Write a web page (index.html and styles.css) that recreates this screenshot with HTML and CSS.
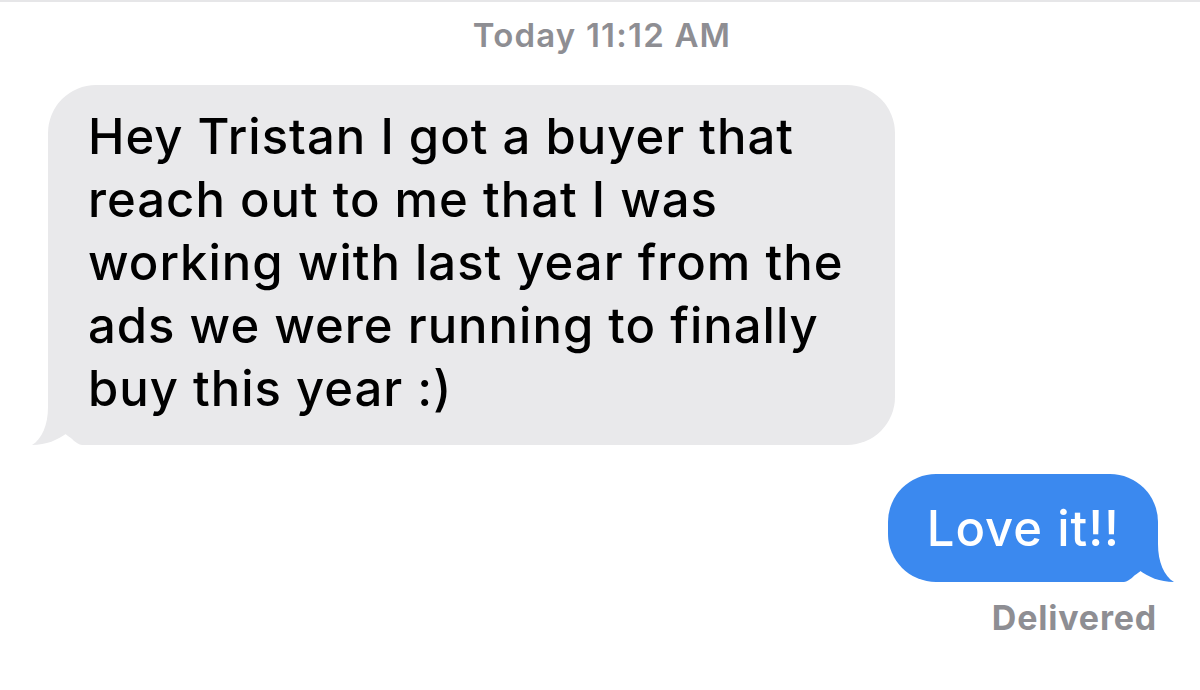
FILE: index.html
```html
<!DOCTYPE html>
<html lang="en">
<head>
<meta charset="utf-8">
<title>Messages</title>
<link rel="stylesheet" href="styles.css">
</head>
<body>
<main class="thread">
  <div class="stamp"><span class="day">Today</span> 11:12 AM</div>
  <div class="row row-them">
    <div class="bubble them">
      Hey Tristan I got a buyer that<br>reach out to me that I was<br>working with last year from the<br>ads we were running to finally<br>buy this year :)
      <svg class="tail tail-them" viewBox="0 0 70 50" aria-hidden="true"><path d="M16 0 L16 12 C16 30 10 44 0 50 C14 50 26 45 35 38 C40 44 44 49 50 50 L70 50 L70 0 Z"/></svg>
    </div>
  </div>
  <div class="row row-me">
    <div class="bubble me">
      Love it!!
      <svg class="tail tail-me" viewBox="0 0 70 50" aria-hidden="true"><path d="M16 0 L16 12 C16 30 10 44 0 50 C14 50 26 45 35 38 C40 44 44 49 50 50 L70 50 L70 0 Z"/></svg>
    </div>
  </div>
  <div class="status">Delivered</div>
</main>
</body>
</html>
```
FILE: styles.css
```css
html, body {
  margin: 0;
  padding: 0;
  background: #ffffff;
}
body {
  font-family: Inter, "Noto Sans", "Liberation Sans", sans-serif;
  font-variant-ligatures: none;
  font-feature-settings: "liga" 0, "calt" 0;
  border-top: 2px solid #e6e6e8;
  height: 688px;
  overflow: hidden;
}
.thread {
  display: flex;
  flex-direction: column;
}
.stamp {
  margin-top: 13px;
  text-align: center;
  font-size: 33px;
  line-height: 40px;
  font-weight: 600;
  letter-spacing: 1.2px;
  color: #8e8e93;
  padding-left: 4px;
}
.row {
  display: flex;
}
.row-them {
  margin-top: 30px;
  padding-left: 48px;
}
.row-me {
  justify-content: flex-end;
  margin-top: 29px;
  padding-right: 42px;
}
.bubble {
  position: relative;
  z-index: 0;
  font-size: 49px;
  line-height: 63px;
  font-weight: 500;
  letter-spacing: 1px;
  border-radius: 48px;
}
.them {
  background: #e9e9eb;
  color: #000;
  width: 767px;
  padding: 20px 40px 25px 40px;
}
.me {
  background: #3b89ef;
  color: #fff;
  height: 108px;
  box-sizing: border-box;
  padding: 0 38px 0 39px;
  display: flex;
  align-items: center;
}
.tail {
  position: absolute;
  z-index: -1;
  bottom: 0;
  width: 70px;
  height: 50px;
}
.tail-them {
  left: -16px;
  fill: #e9e9eb;
}
.tail-me {
  right: -16px;
  fill: #3b89ef;
  transform: scaleX(-1);
}
.status {
  align-self: flex-end;
  margin-right: 43px;
  margin-top: 16px;
  font-size: 34px;
  line-height: 40px;
  font-weight: 700;
  letter-spacing: 0.8px;
  color: #8e8e93;
}
```
